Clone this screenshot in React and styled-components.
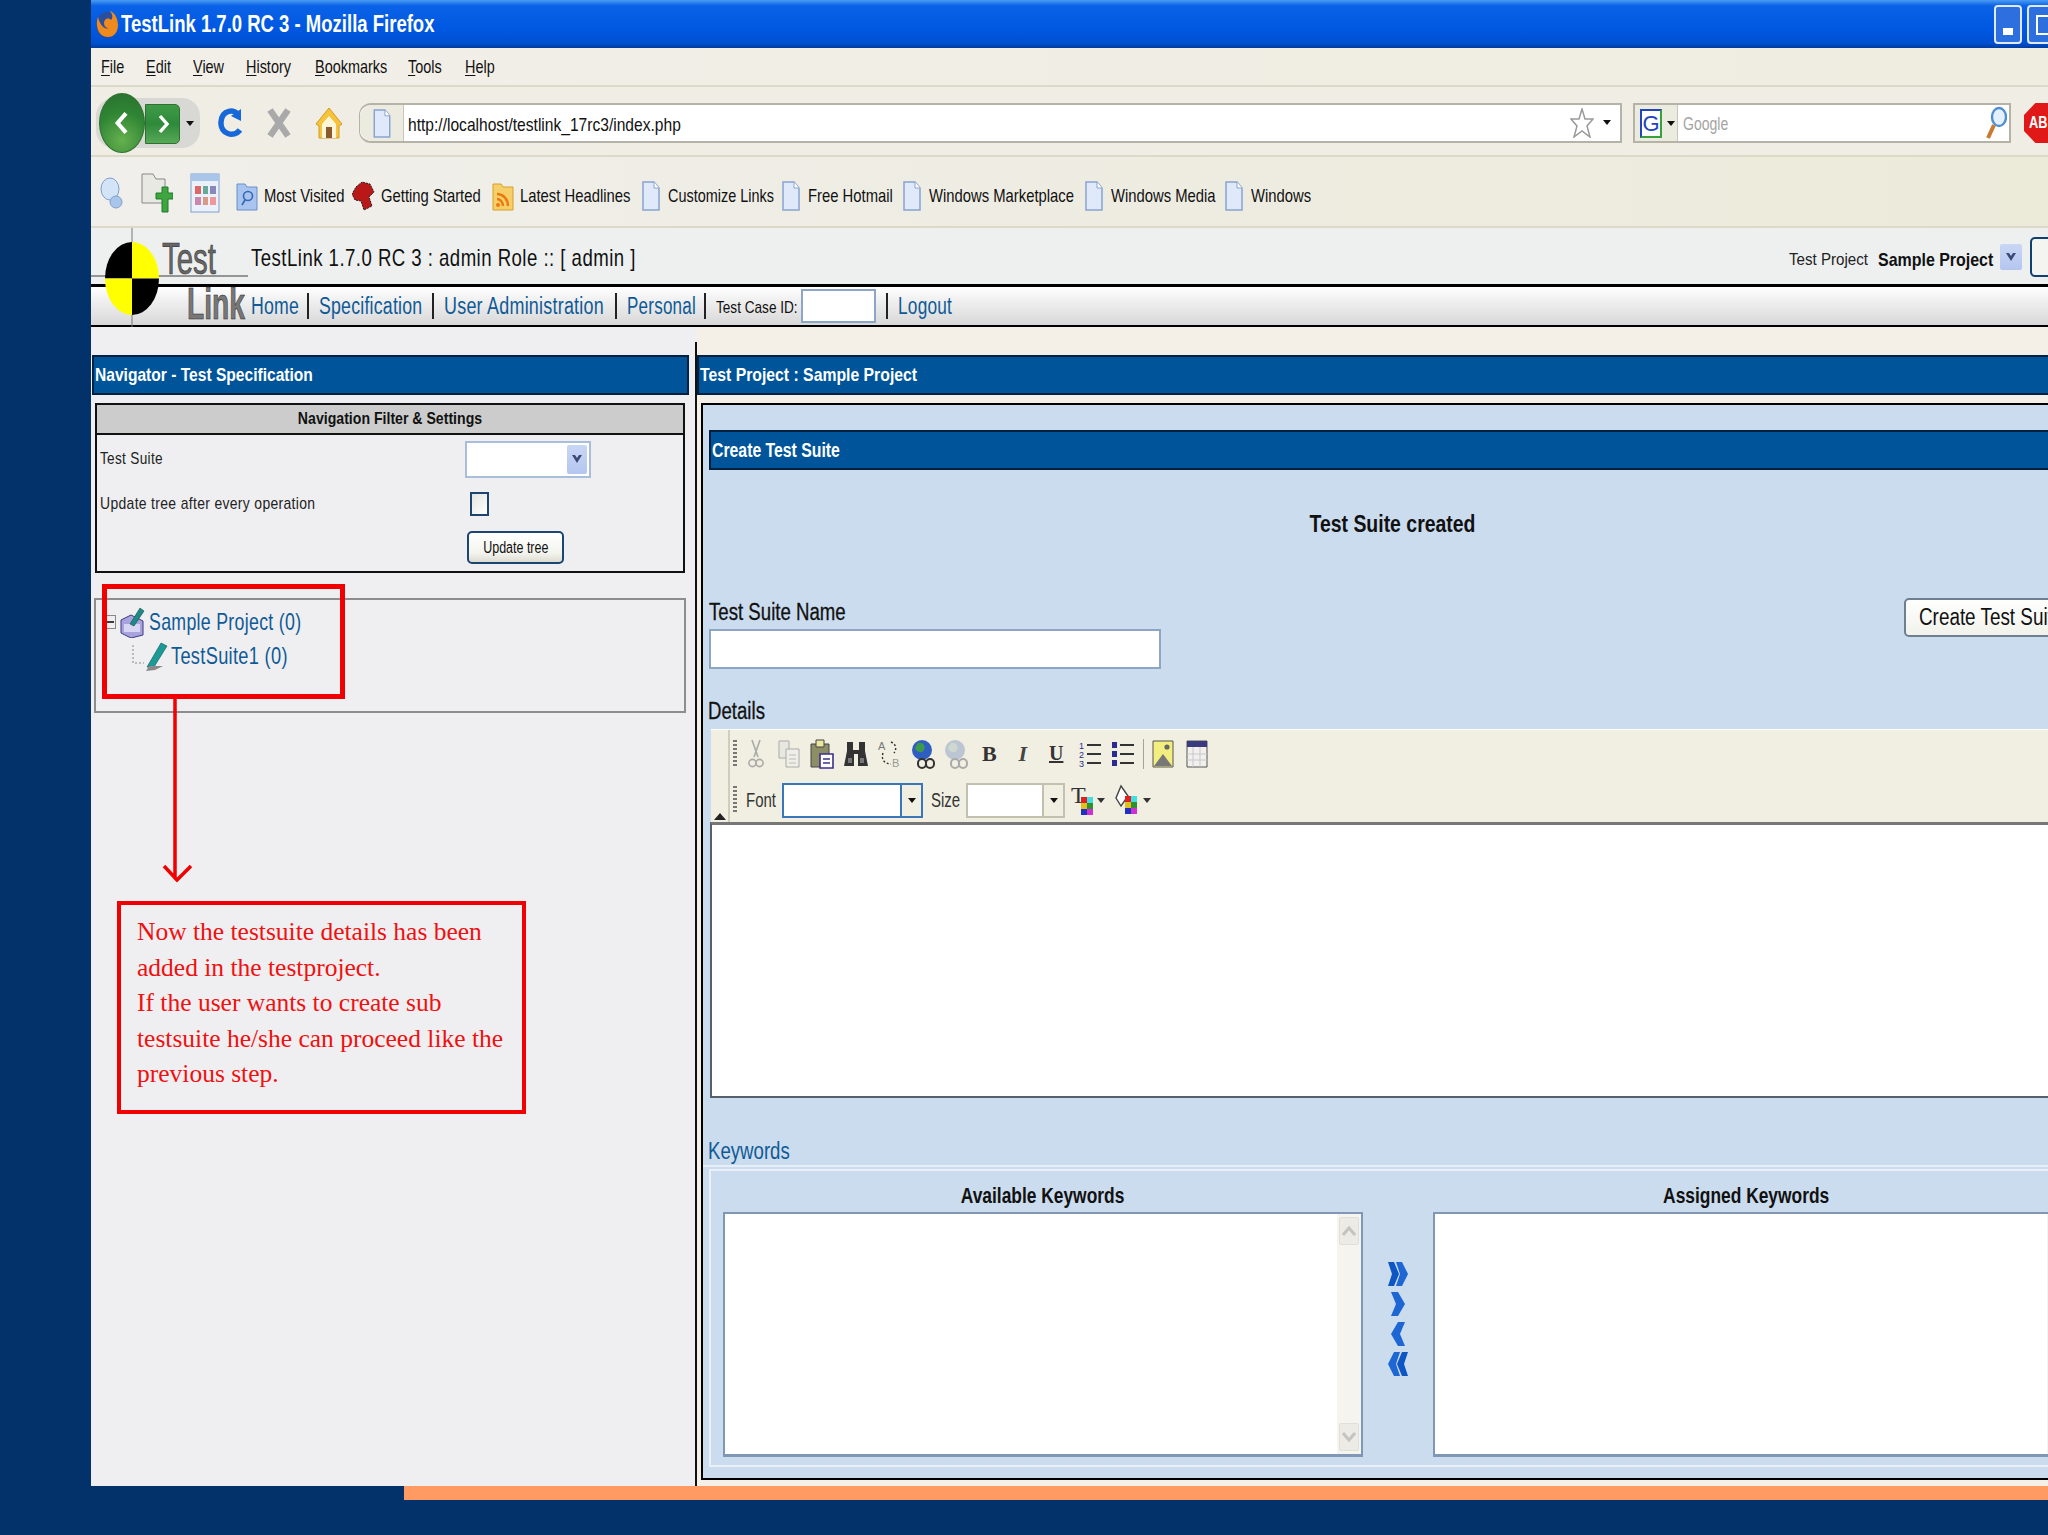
import styled, { createGlobalStyle } from "styled-components";

const sans = `"Liberation Sans", Arial, sans-serif`;

const Global = createGlobalStyle`
	html, body {
		margin: 0;
		padding: 0;
		background: #03326a;
		overflow: hidden;
	}
	* { box-sizing: border-box; }
`;

// the screenshot was squeezed sideways, so all its sans text is narrower than any font we have
const Sq = styled.span`
	display: inline-block;
	white-space: nowrap;
	transform: scaleX(${(p) => p.$x ?? 0.8});
	transform-origin: ${(p) => p.$o ?? "left"} center;
`;

const Slide = styled.div`
	position: relative;
	width: 2048px;
	height: 1535px;
	overflow: hidden;
	background: #03326a;
	font-family: ${sans};
`;
const Window = styled.div`
	margin-left: 91px;
	width: 1957px;
	height: 1486px;
	display: flex;
	flex-direction: column;
	overflow: hidden;
	position: relative;
	background: #efeff1;
`;
const OrangeBar = styled.div`
	margin-left: 404px;
	height: 14px;
	background: #ff9a62;
`;

/* browser chrome */
const TitleBar = styled.div`
	height: 48px;
	flex: none;
	display: flex;
	align-items: center;
	padding-left: 4px;
	gap: 2px;
	background: linear-gradient(#4a9cf2 0, #0a62e6 12%, #0058e2 60%, #0050d0 90%, #003c9e 100%);
	color: #fff;
	font-size: 23px;
	font-weight: bold;
`;
const WinButtons = styled.div`
	margin-left: auto;
	display: flex;
	gap: 5px;
	margin-right: -7px;
`;
const WinButton = styled.div`
	width: 28px;
	height: 39px;
	border: 2px solid #dfe9fb;
	border-radius: 4px;
	background: #2e6fe0;
	position: relative;
	&::after {
		content: "";
		position: absolute;
		left: 7px;
		bottom: 7px;
		width: ${(p) => (p.$max ? "12px" : "10px")};
		height: ${(p) => (p.$max ? "16px" : "7px")};
		background: ${(p) => (p.$max ? "transparent" : "#fff")};
		border: ${(p) => (p.$max ? "2px solid #fff" : "none")};
	}
`;
const MenuBar = styled.div`
	height: 39px;
	flex: none;
	display: flex;
	align-items: center;
	padding-left: 10px;
	background: linear-gradient(90deg, #f1efe8, #efece0);
	border-bottom: 2px solid #dcd9c8;
	font-size: 19px;
	color: #111;
`;
const MenuItem = styled.span`
	width: ${(p) => p.$w}px;
	u { text-underline-offset: 2px; }
`;
const NavBar = styled.div`
	height: 70px;
	flex: none;
	display: flex;
	align-items: center;
	padding: 4px 0 0 5px;
	background: #f0eee4;
	border-bottom: 2px solid #dcd9c8;
`;
const BackForward = styled.div`
	width: 104px;
	height: 50px;
	flex: none;
	position: relative;
	background: #d8d8d4;
	border-radius: 18px;
`;
const BackBtn = styled.div`
	position: absolute;
	left: 3px;
	top: -5px;
	width: 46px;
	height: 60px;
	border-radius: 50%;
	border: 1px solid #2f7030;
	background: radial-gradient(circle at 50% 80%, #65b04e, #2f8534 55%, #2a6f30);
	display: flex;
	align-items: center;
	justify-content: center;
`;
const ForwardBtn = styled.div`
	position: absolute;
	left: 49px;
	top: 6px;
	width: 35px;
	height: 40px;
	background: linear-gradient(#3f9a47, #2e8a3b 50%, #57a957);
	border: 1px solid #2f7030;
	border-radius: 0 5px 5px 0;
	display: flex;
	align-items: center;
	justify-content: center;
`;
const DropTri = styled.div`
	position: absolute;
	left: ${(p) => p.$left}px;
	top: ${(p) => p.$top}px;
	width: 0;
	height: 0;
	border-left: 4px solid transparent;
	border-right: 4px solid transparent;
	border-top: 5px solid #111;
`;
const NavIcon = styled.div`
	width: ${(p) => p.$w}px;
	margin-left: ${(p) => p.$ml}px;
	height: 32px;
	flex: none;
	display: flex;
	justify-content: center;
`;
const UrlBar = styled.div`
	margin-left: 16px;
	width: 1263px;
	height: 40px;
	flex: none;
	display: flex;
	align-items: center;
	background: #fff;
	border: 2px solid #b5b3a6;
	border-left-width: 1px;
	border-radius: 12px 0 0 12px;
	position: relative;
`;
const UrlIcon = styled.div`
	width: 44px;
	height: 100%;
	flex: none;
	display: flex;
	align-items: center;
	justify-content: center;
	background: #ecebe0;
	border-right: 1px solid #c8c6b8;
	border-radius: 12px 0 0 12px;
`;
const UrlText = styled.span`
	margin-left: 4px;
	padding-top: 3px;
	font-size: 19px;
	color: #111;
`;
const StarWrap = styled.div`
	position: absolute;
	left: 1210px;
	top: 3px;
`;
const SearchBar = styled.div`
	margin-left: 11px;
	width: 378px;
	height: 40px;
	flex: none;
	display: flex;
	align-items: center;
	background: #fff;
	border: 2px solid #b5b3a6;
	position: relative;
`;
const SearchEngine = styled.div`
	width: 43px;
	height: 100%;
	flex: none;
	display: flex;
	align-items: center;
	padding-left: 5px;
	background: #ecebe0;
	border-right: 1px solid #c8c6b8;
	position: relative;
	b {
		width: 22px;
		height: 29px;
		border: 2px solid #3aa03a;
		border-top-color: #2244bb;
		border-left-color: #2244bb;
		font: 22px/25px ${sans};
		color: #2244bb;
		text-align: center;
		background: #fff;
	}
`;
const SearchText = styled.span`
	margin-left: 5px;
	padding-top: 3px;
	font-size: 18px;
	color: #a4a4a4;
`;
const MagWrap = styled.div`
	position: absolute;
	right: 2px;
	top: 1px;
`;
const AdBlock = styled.div`
	margin-left: 13px;
	width: 38px;
	height: 40px;
	flex: none;
	background: #e01818;
	clip-path: polygon(30% 0, 70% 0, 100% 30%, 100% 70%, 70% 100%, 30% 100%, 0 70%, 0 30%);
	color: #fff;
	font-size: 16px;
	font-weight: bold;
	line-height: 40px;
	padding-left: 5px;
`;
const BookmarkBar = styled.div`
	height: 71px;
	flex: none;
	display: flex;
	align-items: center;
	padding: 8px 0 0 9px;
	background: linear-gradient(90deg, #f0efeb, #ecead9);
	border-bottom: 2px solid #dcd9c8;
	font-size: 19px;
	color: #111;
`;
const ToolIcon = styled.div`
	width: ${(p) => p.$w}px;
	flex: none;
`;
const Bookmark = styled.div`
	width: ${(p) => p.$w}px;
	flex: none;
	display: flex;
	align-items: center;
	white-space: nowrap;
	svg { flex: none; margin-right: ${(p) => p.$gap ?? 8}px; }
`;

/* testlink header */
const PageHeader = styled.div`
	height: 59px;
	flex: none;
	display: flex;
	align-items: center;
	padding-left: 160px;
	padding-top: 2px;
	background: #eef0f0;
	border-bottom: 3px solid #000;
`;
const PageTitle = styled.div`
	font-size: 24px;
	color: #111;
	letter-spacing: 0.6px;
	padding-top: 2px;
`;
const ProjectPicker = styled.div`
	margin-left: auto;
	display: flex;
	align-items: center;
	font-size: 17px;
	margin-right: -22px;
`;
const ProjectLabel = styled.span`
	width: 89px;
	padding-top: 5px;
	color: #222;
`;
const ProjectName = styled.span`
	width: 122px;
	padding-top: 5px;
	font-size: 19px;
	font-weight: bold;
	color: #111;
`;
const ArrowBox = styled.div`
	width: ${(p) => p.$w}px;
	height: ${(p) => p.$h}px;
	flex: none;
	background: linear-gradient(#c9d6f5, #b4c6f0);
	border-radius: 2px;
	display: flex;
	align-items: center;
	justify-content: center;
	color: #3c4a78;
`;
const GoButton = styled.div`
	width: 40px;
	height: 40px;
	margin-left: 8px;
	background: #f4f4f0;
	border: 2px solid #10406e;
	border-radius: 5px;
`;
const NavLinks = styled.div`
	height: 40px;
	flex: none;
	display: flex;
	align-items: center;
	padding-left: 160px;
	background: linear-gradient(#fff 0, #f2f2f2 30%, #d8d8d8 100%);
	border-bottom: 2px solid #000;
	font-size: 23px;
	white-space: nowrap;
`;
const NavLink = styled.span`
	color: #0f5a96;
	letter-spacing: 0.3px;
	width: ${(p) => p.$w}px;
	flex: none;
`;
const Pipe = styled.span`
	width: 2px;
	height: 26px;
	background: #222;
	margin: 0 10px;
	flex: none;
`;
const CaseLabel = styled.span`
	font-size: 17px;
	color: #111;
	width: 78px;
	flex: none;
	padding-top: 3px;
`;
const CaseInput = styled.div`
	margin-left: 7px;
	width: 75px;
	height: 34px;
	flex: none;
	background: #fff;
	border: 2px solid #8da6c6;
`;

/* panes */
const Panes = styled.div`
	flex: 1;
	display: flex;
	min-height: 0;
`;
const LeftPane = styled.div`
	width: 604px;
	flex: none;
	padding-top: 28px;
	background: #efeff1;
`;
const Divider = styled.div`
	width: 2px;
	flex: none;
	margin-top: 15px;
	background: #111;
`;
const RightPane = styled.div`
	width: 1400px;
	flex: none;
	padding-top: 28px;
	background: #f4f0e7;
`;
const PaneHeader = styled.div`
	height: 40px;
	margin-left: ${(p) => p.$ml ?? 1}px;
	margin-right: ${(p) => p.$mr ?? 0}px;
	display: flex;
	align-items: center;
	padding-left: 1px;
	background: #00559a;
	border: 2px solid #03203f;
	color: #fff;
	font-size: 19px;
	font-weight: bold;
`;
const FilterPanel = styled.div`
	margin: 8px 0 0 4px;
	width: 590px;
	height: 170px;
	border: 2px solid #111;
	background: #efeff1;
`;
const FilterHead = styled.div`
	height: 30px;
	background: #cccccc;
	border-bottom: 2px solid #111;
	display: flex;
	align-items: center;
	justify-content: center;
	font-size: 17px;
	font-weight: bold;
	color: #111;
`;
const FilterRow = styled.div`
	display: flex;
	align-items: center;
	height: ${(p) => p.$h}px;
	padding-left: 3px;
	font-size: 17px;
	color: #222;
`;
const FilterLabel = styled.span`
	width: 365px;
	flex: none;
	letter-spacing: 0.4px;
`;
const SelectBox = styled.div`
	width: 126px;
	height: 37px;
	background: #fff;
	border: 2px solid #a9bedb;
	display: flex;
	justify-content: flex-end;
	padding: 2px;
`;
const CheckBox = styled.div`
	width: 19px;
	height: 24px;
	margin-left: 5px;
	border: 2px solid #1c4670;
	background: linear-gradient(135deg, #e4e4e0, #fff);
`;
const UpdateButton = styled.div`
	margin-left: 2px;
	width: 97px;
	height: 33px;
	border: 2px solid #1c4670;
	border-radius: 5px;
	background: linear-gradient(#fff, #f4f4ee 70%, #dcdcd2);
	display: flex;
	align-items: center;
	justify-content: center;
	font-size: 16px;
	color: #111;
`;
const TreeBox = styled.div`
	margin: 25px 0 0 3px;
	width: 592px;
	height: 115px;
	border: 2px solid #8d8d8d;
	padding-top: 5px;
`;
const TreeRow = styled.div`
	height: 34px;
	display: flex;
	align-items: center;
	padding-left: ${(p) => p.$pl}px;
	font-size: 24px;
	color: #0f5a96;
	letter-spacing: 0.4px;
	white-space: nowrap;
	svg { flex: none; }
`;
const TreeLabel = styled.span`
	margin-left: ${(p) => p.$ml}px;
`;
const ProjectIcon = styled.span`
	display: flex;
	margin-left: 3px;
`;

/* test suite form */
const FormPanel = styled.div`
	margin: 8px 0 0 4px;
	height: 1077px;
	width: 1390px;
	border: 2px solid #000;
	background: #cbdcee;
	padding-top: 25px;
	display: flex;
	flex-direction: column;
`;
const FormHead = styled.div`
	height: 40px;
	flex: none;
	margin-left: 6px;
	padding-left: 1px;
	display: flex;
	align-items: center;
	background: #00559a;
	border: 2px solid #03203f;
	color: #fff;
	font-size: 20px;
	font-weight: bold;
`;
const Message = styled.div`
	height: 108px;
	flex: none;
	display: flex;
	align-items: center;
	justify-content: center;
	font-size: 24px;
	font-weight: bold;
	color: #111;
	padding-right: 8px;
`;
const NameRow = styled.div`
	height: 91px;
	flex: none;
	display: flex;
	padding-left: 6px;
`;
const NameCol = styled.div`
	width: 1195px;
	flex: none;
	padding-top: 20px;
`;
const FieldLabel = styled.div`
	font-size: 23px;
	line-height: 28px;
	color: #111;
	-webkit-text-stroke: 0.3px #111;
`;
const NameInput = styled.div`
	margin-top: 3px;
	width: 452px;
	height: 40px;
	background: #fff;
	border: 2px solid #8da6c6;
`;
const CreateButton = styled.div`
	margin-top: 20px;
	width: 160px;
	height: 39px;
	flex: none;
	border: 2px solid #6f7f90;
	border-radius: 5px;
	background: linear-gradient(#fff, #f2f2ec);
	font-size: 23px;
	line-height: 35px;
	padding-left: 13px;
	white-space: nowrap;
	color: #111;
`;
const DetailsRow = styled.div`
	height: 60px;
	flex: none;
	padding: 28px 0 0 5px;
`;
const Toolbars = styled.div`
	height: 93px;
	flex: none;
	margin-left: 8px;
	background: #f0efe1;
	border-top: 1px solid #fff;
	display: flex;
`;
const Collapse = styled.div`
	width: 19px;
	flex: none;
	border-right: 2px solid #cfcdbb;
	position: relative;
	&::after {
		content: "";
		position: absolute;
		left: 3px;
		bottom: 2px;
		border-left: 6px solid transparent;
		border-right: 6px solid transparent;
		border-bottom: 7px solid #222;
	}
`;
const ToolCol = styled.div`
	flex: 1;
	padding-left: 3px;
`;
const ToolRow = styled.div`
	height: ${(p) => p.$h}px;
	display: flex;
	align-items: center;
	font-size: 20px;
	color: #333;
`;
const ToolLabel = styled.span`
	width: ${(p) => p.$w}px;
	flex: none;
`;
const Grip = styled.div`
	width: 4px;
	height: 28px;
	flex: none;
	margin-right: ${(p) => p.$mr}px;
	background: repeating-linear-gradient(#777 0 2px, transparent 2px 4px);
`;
const ToolBtn = styled.div`
	width: 33.4px;
	flex: none;
	display: flex;
	justify-content: center;
`;
const ToolSep = styled.div`
	width: 1px;
	height: 30px;
	margin: 0 3px 0 3px;
	background: #a7a58f;
`;
const Combo = styled.div`
	margin: 0 8px 0 ${(p) => p.$ml}px;
	width: ${(p) => p.$w}px;
	height: 35px;
	flex: none;
	display: flex;
	background: #fff;
	border: 2px solid ${(p) => p.$c};
	span {
		margin-left: auto;
		width: 21px;
		background: #f0efe1;
		border-left: 2px solid ${(p) => p.$c};
		display: flex;
		align-items: center;
		justify-content: center;
		&::after {
			content: "";
			border-left: 4px solid transparent;
			border-right: 4px solid transparent;
			border-top: 5px solid #111;
		}
	}
`;
const ColorBtn = styled.div`
	width: ${(p) => p.$w}px;
	margin-left: ${(p) => p.$ml}px;
	flex: none;
	display: flex;
`;
const Editor = styled.div`
	height: 276px;
	flex: none;
	margin-left: 7px;
	background: #fff;
	border-top: 3px solid #777;
	border-left: 2px solid #55606c;
	border-bottom: 2px solid #55606c;
`;
const KeywordTitle = styled.div`
	height: 69px;
	flex: none;
	padding: 39px 0 0 5px;
	font-size: 23px;
	line-height: 28px;
	color: #0f5a96;
	border-bottom: 2px solid #e6eef7;
`;
const KeywordPanel = styled.div`
	height: 298px;
	flex: none;
	margin: 2px 0 0 6px;
	border: 2px solid #e9f0f8;
	display: grid;
	grid-template-columns: 640px 70px 640px;
	padding-left: 12px;
`;
const KeywordCol = styled.div`
	display: flex;
	flex-direction: column;
`;
const KeywordHead = styled.div`
	height: 41px;
	display: flex;
	align-items: center;
	justify-content: center;
	font-size: 22px;
	font-weight: bold;
	color: #111;
	padding-top: 8px;
	padding-right: ${(p) => p.$pr ?? 0}px;
`;
const KeywordList = styled.div`
	height: 245px;
	background: #fff;
	border: 2px solid #8097b5;
	border-bottom-width: 3px;
	display: flex;
	justify-content: flex-end;
`;
const ScrollTrack = styled.div`
	width: 24px;
	background: #f5f4ef;
	display: flex;
	flex-direction: column;
	justify-content: space-between;
`;
const ScrollBtn = styled.div`
	height: 28px;
	margin: 3px 2px;
	background: #ecebe6;
	border: 1px solid #e0dfd8;
	border-radius: 2px;
	color: #c4c4c0;
	display: flex;
	align-items: center;
	justify-content: center;
`;
const MoveCol = styled.div`
	display: flex;
	flex-direction: column;
	align-items: center;
	padding-top: 90px;
	gap: 4px;
`;

/* annotations drawn over the screenshot */
const RedFrame = styled.div`
	position: absolute;
	left: 102px;
	top: 584px;
	width: 243px;
	height: 115px;
	border: 5px solid #f00000;
`;
const RedArrow = styled.svg`
	position: absolute;
	left: 155px;
	top: 698px;
`;
const NoteBox = styled.div`
	position: absolute;
	left: 117px;
	top: 901px;
	width: 409px;
	height: 213px;
	border: 4px solid #f00000;
	background: #efeff1;
	padding: 9px 0 0 16px;
	font-family: "Liberation Serif", serif;
	font-size: 25.5px;
	line-height: 35.5px;
	color: #f01010;
	white-space: nowrap;
`;
const LogoSvg = styled.svg`
	position: absolute;
	left: 0;
	top: 228px;
`;
const BoldGlyph = styled.span`
	font: bold 22px "Liberation Serif", serif;
	color: #333;
`;
const ItalicGlyph = styled.span`
	font: italic bold 22px "Liberation Serif", serif;
	color: #444;
`;
const UnderGlyph = styled.span`
	font: bold 20px "Liberation Serif", serif;
	color: #333;
	text-decoration: underline;
`;

const Doc = ({ w = 18, h = 30 }) => (
	<svg width={w} height={h} viewBox="0 0 18 30">
		<path d="M1 1h11l5 6v22H1z" fill="#dfe9fa" stroke="#8ba3cf" strokeWidth="1.5" />
		<path d="M12 1v6h5" fill="#fff" stroke="#8ba3cf" />
	</svg>
);

const Chevron = ({ dir, color = "#fff", size = 20 }) => (
	<svg width={size * 0.7} height={size} viewBox="0 0 14 20">
		<path d={dir === "left" ? "M10 2L3 10l7 8" : "M4 2l7 8-7 8"} fill="none" stroke={color} strokeWidth="3.4" />
	</svg>
);

const Firefox = () => (
	<svg width="24" height="30" viewBox="0 0 24 30">
		<ellipse cx="12" cy="16" rx="11" ry="13" fill="#2b4f9e" />
		<path d="M3 8c-3 8 0 20 10 20 7 0 10-6 10-12 0-7-4-13-8-14 3 4 3 7 1 9-3-3-7-1-7 3 0 3 2 5 5 5-5 2-9-3-11-11z" fill="#ee8a1e" />
	</svg>
);

const Logo = () => (
	<LogoSvg width="160" height="100" viewBox="0 0 160 100">
		<line x1="0" y1="48" x2="157" y2="48" stroke="#777" strokeWidth="1.5" />
		<line x1="41" y1="0" x2="41" y2="99" stroke="#777" strokeWidth="1" />
		<path d="M41 14a27 36.5 0 0 1 27 36.5H41z" fill="#ffff00" />
		<path d="M41 14a27 36.5 0 0 0-27 36.5h27z" fill="#000" />
		<path d="M41 87a27 36.5 0 0 1-27-36.5h27z" fill="#ffff00" />
		<path d="M41 87a27 36.5 0 0 0 27-36.5H41z" fill="#000" />
		<text x="71" y="46" fontFamily={sans} fontSize="45" fill="#666" stroke="#333" strokeWidth="0.6" textLength="54" lengthAdjust="spacingAndGlyphs">Test</text>
		<text x="96" y="91" fontFamily={sans} fontSize="45" fontWeight="bold" fill="#777" stroke="#222" strokeWidth="0.6" textLength="58" lengthAdjust="spacingAndGlyphs">Link</text>
	</LogoSvg>
);

const Project = () => (
	<svg width="26" height="32" viewBox="0 0 26 32">
		<path d="M2 14l10-5 12 6v14l-12 3-10-5z" fill="#a8a2de" stroke="#3d3a80" />
		<path d="M5 18h16v8H5z" fill="#d8d4f4" />
		<path d="M11 18L21 2l4 3-10 15z" fill="#1d8a86" stroke="#0c4f50" strokeWidth=".6" />
	</svg>
);
const Suite = () => (
	<svg width="24" height="30" viewBox="0 0 24 30">
		<path d="M3 26L17 2l6 3L10 26z" fill="#1b9a98" stroke="#0c5557" strokeWidth=".6" />
		<path d="M2 30l3-5h14l-8 4z" fill="#8a8a8a" />
	</svg>
);

const tools = [
	<svg key="cut" width="16" height="30" viewBox="0 0 16 30"><path d="M4 1l6 17M12 1L6 18" stroke="#aaa" strokeWidth="1.6" fill="none" /><circle cx="4.5" cy="24" r="3.6" fill="none" stroke="#aaa" strokeWidth="1.6" /><circle cx="11.5" cy="24" r="3.6" fill="none" stroke="#aaa" strokeWidth="1.6" /></svg>,
	<svg key="copy" width="22" height="28" viewBox="0 0 22 28"><path d="M1 1h10v17H1z" fill="#e8e8e0" stroke="#aaa" /><path d="M8 9h13v18H8z" fill="#efefe8" stroke="#aaa" /><path d="M11 15h7M11 19h7M11 23h7" stroke="#bbb" /></svg>,
	<svg key="paste" width="24" height="30" viewBox="0 0 24 30"><path d="M1 5h18v23H1z" fill="#8e8e66" stroke="#444" /><path d="M6 1h8v7H6z" fill="#e9e6a0" stroke="#444" /><path d="M10 15h13v14H10z" fill="#fff" stroke="#3c2f8a" strokeWidth="1.6" /><path d="M13 20h7M13 24h7" stroke="#3c2f8a" strokeWidth="1.4" /></svg>,
	<svg key="find" width="24" height="28" viewBox="0 0 24 28"><path d="M3 2h6v8h6V2h6v9l3 15H14V14h-4v12H0l3-15z" fill="#333" /><path d="M4 18h4v5H4zM16 18h4v5h-4z" fill="#777" /></svg>,
	<svg key="replace" width="24" height="30" viewBox="0 0 24 30"><text x="1" y="11" fontSize="11" fontFamily={sans} fill="#777">A</text><text x="15" y="28" fontSize="11" fontFamily={sans} fill="#999">B</text><path d="M6 14c-2 6 1 11 8 11M14 3c5 2 6 7 3 11" fill="none" stroke="#333" strokeWidth="1.4" strokeDasharray="2 2" /></svg>,
	<svg key="link" width="24" height="32" viewBox="0 0 24 32"><circle cx="11" cy="12" r="10" fill="#2e5fc0" /><path d="M7 5c5-1 8 3 6 7s-8 2-9-2z" fill="#3c9a4a" /><rect x="7" y="21" width="8" height="9" rx="4" fill="none" stroke="#333" strokeWidth="2" /><rect x="15" y="21" width="8" height="9" rx="4" fill="none" stroke="#333" strokeWidth="2" /></svg>,
	<svg key="unlink" width="24" height="32" viewBox="0 0 24 32"><circle cx="11" cy="12" r="10" fill="#bcc6d2" /><path d="M7 5c5-1 8 3 6 7s-8 2-9-2z" fill="#cfd8d0" /><rect x="7" y="21" width="8" height="9" rx="4" fill="none" stroke="#aaa" strokeWidth="2" /><rect x="15" y="21" width="8" height="9" rx="4" fill="none" stroke="#aaa" strokeWidth="2" /></svg>,
	<BoldGlyph key="b">B</BoldGlyph>,
	<ItalicGlyph key="i">I</ItalicGlyph>,
	<UnderGlyph key="u">U</UnderGlyph>,
	<svg key="ol" width="22" height="28" viewBox="0 0 22 28"><text x="0" y="9" fontSize="9" fontFamily={sans} fill="#2a2a90">1</text><text x="0" y="18" fontSize="9" fontFamily={sans} fill="#2a2a90">2</text><text x="0" y="27" fontSize="9" fontFamily={sans} fill="#2a2a90">3</text><path d="M8 5h14M8 14h14M8 23h14" stroke="#333" strokeWidth="2" /></svg>,
	<svg key="ul" width="22" height="26" viewBox="0 0 22 26"><path d="M0 1h5v6H0zM0 10h5v6H0zM0 19h5v6H0z" fill="#2a2a90" /><path d="M8 4h14M8 13h14M8 22h14" stroke="#333" strokeWidth="2" /></svg>,
];

const ImageIcon = () => (
	<svg width="22" height="28" viewBox="0 0 22 28"><path d="M1 1h20v26H1z" fill="#f3ee80" stroke="#555" /><path d="M2 26l9-12 9 12z" fill="#777" /><circle cx="15" cy="7" r="2.6" fill="#666" /></svg>
);
const TableIcon = () => (
	<svg width="22" height="28" viewBox="0 0 22 28"><path d="M1 1h20v26H1z" fill="#f2f0ee" stroke="#555" /><path d="M1 1h20v6H1z" fill="#3a3a80" /><path d="M1 14h20M1 20h20M7 7v20M14 7v20" stroke="#c8c8c8" /></svg>
);
const Swatches = ({ x, y }) => (
	<g transform={`translate(${x} ${y})`}>
		<rect width="6" height="6" fill="#e02020" /><rect x="6" width="6" height="6" fill="#40e0e0" />
		<rect y="6" width="6" height="6" fill="#e0c020" /><rect x="6" y="6" width="6" height="6" fill="#309030" />
		<rect y="12" width="6" height="6" fill="#2030c0" /><rect x="6" y="12" width="6" height="6" fill="#d030d0" />
	</g>
);

const Move = ({ double, left }) => (
	<svg width="20" height="26" viewBox="0 0 20 26">
		<g transform={left ? "translate(20 0) scale(-1 1)" : undefined}>
			{double && <path d="M0 1h6l5 12-5 12H0l4-12z" fill="#0e56c4" />}
			<path d={double ? "M8 1h6l6 12-6 12H8l4-12z" : "M3 1h7l7 12-7 12H3l5-12z"} fill="#1d66d4" />
		</g>
	</svg>
);

const Scrollbar = () => (
	<ScrollTrack>
		<ScrollBtn><svg width="14" height="10" viewBox="0 0 14 10"><path d="M1 9l6-7 6 7" fill="none" stroke="currentColor" strokeWidth="3" /></svg></ScrollBtn>
		<ScrollBtn><svg width="14" height="10" viewBox="0 0 14 10"><path d="M1 1l6 7 6-7" fill="none" stroke="currentColor" strokeWidth="3" /></svg></ScrollBtn>
	</ScrollTrack>
);

const menu = [
	["F", "ile", 45],
	["E", "dit", 47],
	["V", "iew", 53],
	["H", "istory", 69],
	["B", "ookmarks", 93],
	["T", "ools", 57],
	["H", "elp", 50],
];

const ChevDown = () => (
	<svg width="12" height="12" viewBox="0 0 12 12"><path d="M1 2l5 8 5-8-3 0-2 3-2-3z" fill="#3c4a78" /></svg>
);

export default function App() {
	return (
		<Slide>
			<Global />
			<Window>
				<TitleBar>
					<Firefox />
					<Sq $x={0.805}>TestLink 1.7.0 RC 3 - Mozilla Firefox</Sq>
					<WinButtons>
						<WinButton />
						<WinButton $max />
					</WinButtons>
				</TitleBar>
				<MenuBar>
					{menu.map(([k, rest, w]) => (
						<MenuItem key={k + rest} $w={w}>
							<Sq $x={0.76}>
								<u>{k}</u>
								{rest}
							</Sq>
						</MenuItem>
					))}
				</MenuBar>
				<NavBar>
					<BackForward>
						<BackBtn>
							<Chevron dir="left" size={24} />
						</BackBtn>
						<ForwardBtn>
							<Chevron dir="right" size={20} />
						</ForwardBtn>
						<DropTri $left={90} $top={23} />
					</BackForward>
					<NavIcon $w={24} $ml={18}>
						<svg width="24" height="32" viewBox="0 0 24 32">
							<path d="M21 8C17 2 4 2 3 15c-1 12 13 16 19 8" fill="none" stroke="#1868d8" strokeWidth="5.5" />
							<path d="M13 9l10 5V2z" fill="#1868d8" />
						</svg>
					</NavIcon>
					<NavIcon $w={26} $ml={24}>
						<svg width="26" height="32" viewBox="0 0 26 32">
							<path d="M4 3l18 26M22 3L4 29" stroke="#a9a9a9" strokeWidth="6.5" />
						</svg>
					</NavIcon>
					<NavIcon $w={28} $ml={23}>
						<svg width="28" height="32" viewBox="0 0 28 32">
							<path d="M14 1L1 17l3 2v12h20V19l3-2z" fill="#f6c33c" stroke="#d49a22" />
							<path d="M7 17l7-8 7 8v14H7z" fill="#fff5d8" />
							<path d="M11 20h6v11h-6z" fill="#8a5a2a" />
						</svg>
					</NavIcon>
					<UrlBar>
						<UrlIcon>
							<Doc w={18} h={29} />
						</UrlIcon>
						<UrlText>
							<Sq $x={0.82}>http://localhost/testlink_17rc3/index.php</Sq>
						</UrlText>
						<StarWrap>
							<svg width="24" height="30" viewBox="0 0 24 30">
								<path d="M12 1l3 10h8l-6 7 3 11-8-6-8 6 3-11-6-7h8z" fill="#fff" stroke="#9a9a9a" strokeWidth="1.5" />
							</svg>
						</StarWrap>
						<DropTri $left={1243} $top={15} />
					</UrlBar>
					<SearchBar>
						<SearchEngine>
							<b>G</b>
							<DropTri $left={32} $top={16} />
						</SearchEngine>
						<SearchText>
							<Sq $x={0.78}>Google</Sq>
						</SearchText>
						<MagWrap>
							<svg width="24" height="34" viewBox="0 0 24 34">
								<ellipse cx="16" cy="11" rx="7" ry="9" fill="#e4f0fb" stroke="#4e8fd0" strokeWidth="2.4" />
								<path d="M11 19L5 32" stroke="#c87a30" strokeWidth="4" />
							</svg>
						</MagWrap>
					</SearchBar>
					<AdBlock>
						<Sq $x={0.8}>AB</Sq>
					</AdBlock>
				</NavBar>
				<BookmarkBar>
					<ToolIcon $w={41}>
						<svg width="24" height="32" viewBox="0 0 24 32">
							<ellipse cx="10" cy="12" rx="9" ry="11" fill="#d4e4f8" stroke="#7fa0cc" />
							<circle cx="16" cy="25" r="6" fill="#a9c6ea" stroke="#7fa0cc" />
						</svg>
					</ToolIcon>
					<ToolIcon $w={49}>
						<svg width="32" height="40" viewBox="0 0 32 40">
							<path d="M1 1h11l3 5h9v24H1z" fill="#e9e9e4" stroke="#888" />
							<path d="M15 20h6v-6h6v6h5v6h-5v13h-6V26h-6z" fill="#3fa63f" stroke="#1f7a2a" />
						</svg>
					</ToolIcon>
					<ToolIcon $w={46}>
						<svg width="30" height="40" viewBox="0 0 30 40">
							<rect x="1" y="1" width="28" height="38" fill="#eaf1fb" stroke="#7fa0cc" />
							<rect x="1" y="1" width="28" height="7" fill="#a9c6ea" />
							<path d="M5 13h6v8H5z" fill="#d66" /><path d="M13 13h5v8h-5z" fill="#6a9" /><path d="M20 13h6v8h-6z" fill="#88b" />
							<path d="M5 24h6v8H5z" fill="#c8a" /><path d="M13 24h5v8h-5z" fill="#d98" /><path d="M20 24h6v8h-6z" fill="#e99" />
						</svg>
					</ToolIcon>
					<Bookmark $w={116} $gap={6}>
						<svg width="22" height="30" viewBox="0 0 22 30">
							<path d="M1 3h8l2 3h10v23H1z" fill="#a9c4ee" stroke="#6a8fc8" />
							<circle cx="12" cy="15" r="4.5" fill="none" stroke="#3468b0" strokeWidth="1.6" />
							<path d="M9 19l-3 5" stroke="#3468b0" strokeWidth="1.6" />
						</svg>
						<Sq $x={0.78}>Most Visited</Sq>
					</Bookmark>
					<Bookmark $w={140} $gap={6}>
						<svg width="23" height="30" viewBox="0 0 23 30">
							<path d="M4 6l6-5 8 2 4 8-5 5 3 9-8 4-3-9-6-1-3-6z" fill="#b81818" stroke="#222" strokeDasharray="2 1" />
						</svg>
						<Sq $x={0.78}>Getting Started</Sq>
					</Bookmark>
					<Bookmark $w={150} $gap={6}>
						<svg width="22" height="30" viewBox="0 0 22 30">
							<path d="M1 3h8l2 3h10v23H1z" fill="#f6cf68" stroke="#d89e28" />
							<path d="M5 13c6 0 11 5 11 12M5 18c3 0 6 3 6 7" fill="none" stroke="#ea7a10" strokeWidth="2.4" />
							<circle cx="6" cy="24" r="2" fill="#ea7a10" />
						</svg>
						<Sq $x={0.78}>Latest Headlines</Sq>
					</Bookmark>
					<Bookmark $w={140}>
						<Doc />
						<Sq $x={0.76}>Customize Links</Sq>
					</Bookmark>
					<Bookmark $w={121}>
						<Doc />
						<Sq $x={0.78}>Free Hotmail</Sq>
					</Bookmark>
					<Bookmark $w={182}>
						<Doc />
						<Sq $x={0.78}>Windows Marketplace</Sq>
					</Bookmark>
					<Bookmark $w={140}>
						<Doc />
						<Sq $x={0.78}>Windows Media</Sq>
					</Bookmark>
					<Bookmark $w={100}>
						<Doc />
						<Sq $x={0.78}>Windows</Sq>
					</Bookmark>
				</BookmarkBar>
				<PageHeader>
					<PageTitle>
						<Sq $x={0.775}>TestLink 1.7.0 RC 3 : admin Role :: [ admin ]</Sq>
					</PageTitle>
					<ProjectPicker>
						<ProjectLabel>
							<Sq $x={0.89}>Test Project</Sq>
						</ProjectLabel>
						<ProjectName>
							<Sq $x={0.84}>Sample Project</Sq>
						</ProjectName>
						<ArrowBox $w={22} $h={26}>
							<ChevDown />
						</ArrowBox>
						<GoButton />
					</ProjectPicker>
				</PageHeader>
				<NavLinks>
					<NavLink $w={46}><Sq $x={0.77}>Home</Sq></NavLink>
					<Pipe />
					<NavLink $w={103}><Sq $x={0.77}>Specification</Sq></NavLink>
					<Pipe />
					<NavLink $w={161}><Sq $x={0.78}>User Administration</Sq></NavLink>
					<Pipe />
					<NavLink $w={67}><Sq $x={0.74}>Personal</Sq></NavLink>
					<Pipe />
					<CaseLabel><Sq $x={0.8}>Test Case ID:</Sq></CaseLabel>
					<CaseInput />
					<Pipe />
					<NavLink $w={56}><Sq $x={0.75}>Logout</Sq></NavLink>
				</NavLinks>
				<Panes>
					<LeftPane>
						<PaneHeader $mr={6}>
							<Sq $x={0.82}>Navigator - Test Specification</Sq>
						</PaneHeader>
						<FilterPanel>
							<FilterHead>
								<Sq $x={0.83} $o="center">Navigation Filter &amp; Settings</Sq>
							</FilterHead>
							<FilterRow $h={48}>
								<FilterLabel><Sq $x={0.8}>Test Suite</Sq></FilterLabel>
								<SelectBox>
									<ArrowBox $w={20} $h={29}>
										<ChevDown />
									</ArrowBox>
								</SelectBox>
							</FilterRow>
							<FilterRow $h={41}>
								<FilterLabel><Sq $x={0.82}>Update tree after every operation</Sq></FilterLabel>
								<CheckBox />
							</FilterRow>
							<FilterRow $h={47}>
								<FilterLabel />
								<UpdateButton>
									<Sq $x={0.78} $o="center">Update tree</Sq>
								</UpdateButton>
							</FilterRow>
						</FilterPanel>
						<TreeBox>
							<TreeRow $pl={8}>
								<svg width="12" height="14" viewBox="0 0 12 14">
									<rect x="0.5" y="0.5" width="11" height="13" fill="#eee" stroke="#888" />
									<path d="M2 7h8" stroke="#111" strokeWidth="1.6" />
								</svg>
								<ProjectIcon>
									<Project />
								</ProjectIcon>
								<TreeLabel $ml={4}><Sq $x={0.74}>Sample Project (0)</Sq></TreeLabel>
							</TreeRow>
							<TreeRow $pl={36}>
								<svg width="12" height="22" viewBox="0 0 12 22">
									<path d="M1 0v18h11" fill="none" stroke="#888" strokeDasharray="2 2" />
								</svg>
								<Suite />
								<TreeLabel $ml={3}><Sq $x={0.76}>TestSuite1 (0)</Sq></TreeLabel>
							</TreeRow>
						</TreeBox>
					</LeftPane>
					<Divider />
					<RightPane>
						<PaneHeader $ml={0}>
							<Sq $x={0.83}>Test Project : Sample Project</Sq>
						</PaneHeader>
						<FormPanel>
							<FormHead>
								<Sq $x={0.79}>Create Test Suite</Sq>
							</FormHead>
							<Message>
								<Sq $x={0.81} $o="center">Test Suite created</Sq>
							</Message>
							<NameRow>
								<NameCol>
									<FieldLabel><Sq $x={0.81}>Test Suite Name</Sq></FieldLabel>
									<NameInput />
								</NameCol>
								<CreateButton>
									<Sq $x={0.82}>Create Test Suite</Sq>
								</CreateButton>
							</NameRow>
							<DetailsRow>
								<FieldLabel><Sq $x={0.81}>Details</Sq></FieldLabel>
							</DetailsRow>
							<Toolbars>
								<Collapse />
								<ToolCol>
									<ToolRow $h={47}>
										<Grip $mr={2} />
										{tools.map((t, i) => (
											<ToolBtn key={i}>{t}</ToolBtn>
										))}
										<ToolSep />
										<ToolBtn><ImageIcon /></ToolBtn>
										<ToolBtn><TableIcon /></ToolBtn>
									</ToolRow>
									<ToolRow $h={46}>
										<Grip $mr={9} />
										<ToolLabel $w={29}><Sq $x={0.75}>Font</Sq></ToolLabel>
										<Combo $ml={7} $w={141} $c="#3a76b8"><span /></Combo>
										<ToolLabel $w={27}><Sq $x={0.75}>Size</Sq></ToolLabel>
										<Combo $ml={8} $w={99} $c="#c2c0ae"><span /></Combo>
										<ColorBtn $w={36} $ml={-2}>
											<svg width="36" height="32" viewBox="0 0 36 32">
												<text x="0" y="19" fontFamily="Liberation Serif" fontSize="24" fill="#333">T</text>
												<Swatches x="10" y="13" />
												<path d="M26 14h8l-4 5z" fill="#333" />
											</svg>
										</ColorBtn>
										<ColorBtn $w={36} $ml={8}>
											<svg width="36" height="32" viewBox="0 0 36 32">
												<path d="M6 2l7 10-7 10-5-8z" fill="#fff" stroke="#444" strokeWidth="1.4" />
												<Swatches x="10" y="12" />
												<path d="M28 14h8l-4 5z" fill="#333" />
											</svg>
										</ColorBtn>
									</ToolRow>
								</ToolCol>
							</Toolbars>
							<Editor />
							<KeywordTitle><Sq $x={0.81}>Keywords</Sq></KeywordTitle>
							<KeywordPanel>
								<KeywordCol>
									<KeywordHead><Sq $x={0.79} $o="center">Available Keywords</Sq></KeywordHead>
									<KeywordList>
										<Scrollbar />
									</KeywordList>
								</KeywordCol>
								<MoveCol>
									<Move double />
									<Move />
									<Move left />
									<Move double left />
								</MoveCol>
								<KeywordCol>
									<KeywordHead $pr={13}><Sq $x={0.79} $o="center">Assigned Keywords</Sq></KeywordHead>
									<KeywordList>
										<Scrollbar />
									</KeywordList>
								</KeywordCol>
							</KeywordPanel>
						</FormPanel>
					</RightPane>
				</Panes>
				<Logo />
			</Window>
			<OrangeBar />
			<RedFrame />
			<RedArrow width="44" height="190" viewBox="0 0 44 190">
				<path d="M20 0v180l2 2M9 168l13 14 14-14" fill="none" stroke="#f00000" strokeWidth="3.5" />
			</RedArrow>
			<NoteBox>
				Now the testsuite details has been
				<br />
				added in the testproject.
				<br />
				If the user wants to create sub
				<br />
				testsuite he/she can proceed like the
				<br />
				previous step.
			</NoteBox>
		</Slide>
	);
}
